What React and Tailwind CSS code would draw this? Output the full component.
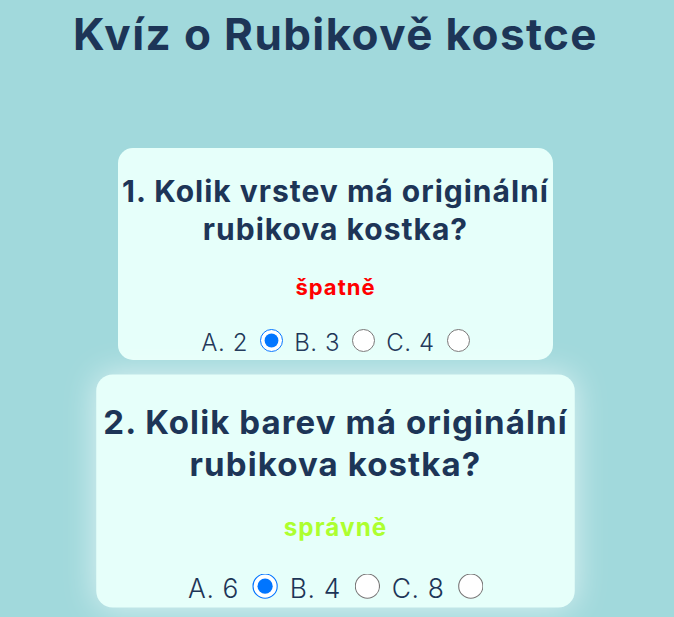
import React from "react";

const font = { fontFamily: "Inter, 'Liberation Sans', sans-serif" };

function Card({ num, q, status, statusColor, opts, scaled }) {
  return (
    <div
      className={
        "w-[435px] h-[212px] rounded-[15px] bg-[#e6fffa] flex flex-col items-center pt-[24px] " +
        (scaled ? "scale-110 shadow-[0_0_30px_rgba(255,255,255,0.65)]" : "")
      }
    >
      <h2 className="text-[30px] leading-[38px] font-bold tracking-[1px] text-[#1d3557] text-center whitespace-nowrap">
        {num}. {q}
        <br />
        rubikova kostka?
      </h2>
      <p className={"mt-[25px] text-[22px] leading-[28px] font-bold tracking-[1px] " + statusColor}>{status}</p>
      <div className="mt-[26px] flex items-center text-[24px] leading-[32px] font-light tracking-[0.6px] text-[#1d3557]">
        {opts.map((o, i) => (
          <React.Fragment key={i}>
            <span className={i > 0 ? "ml-[11px]" : ""}>{o}</span>
            <input
              type="radio"
              name={"q" + num}
              defaultChecked={i === 0}
              className="ml-[12px] m-0 w-[23px] h-[23px] mb-[6px]"
            />
          </React.Fragment>
        ))}
      </div>
    </div>
  );
}

export default function App() {
  return (
    <div style={font} className="min-h-[617px] bg-[#a1d9dc] flex flex-col items-center overflow-hidden pr-[3px]">
      <h1 className="mt-[8px] text-[44px] leading-[53px] font-bold tracking-[1.4px] text-[#1d3557]">Kvíz o Rubikově kostce</h1>
      <div className="mt-[87px] flex flex-col items-center gap-[25px]">
        <Card
          num={1}
          q="Kolik vrstev má originální"
          status="špatně"
          statusColor="text-[#ff0000]"
          opts={["A. 2", "B. 3", "C. 4"]}
        />
        <Card
          num={2}
          q="Kolik barev má originální"
          status="správně"
          statusColor="text-[#adff2f]"
          opts={["A. 6", "B. 4", "C. 8"]}
          scaled
        />
      </div>
    </div>
  );
}
